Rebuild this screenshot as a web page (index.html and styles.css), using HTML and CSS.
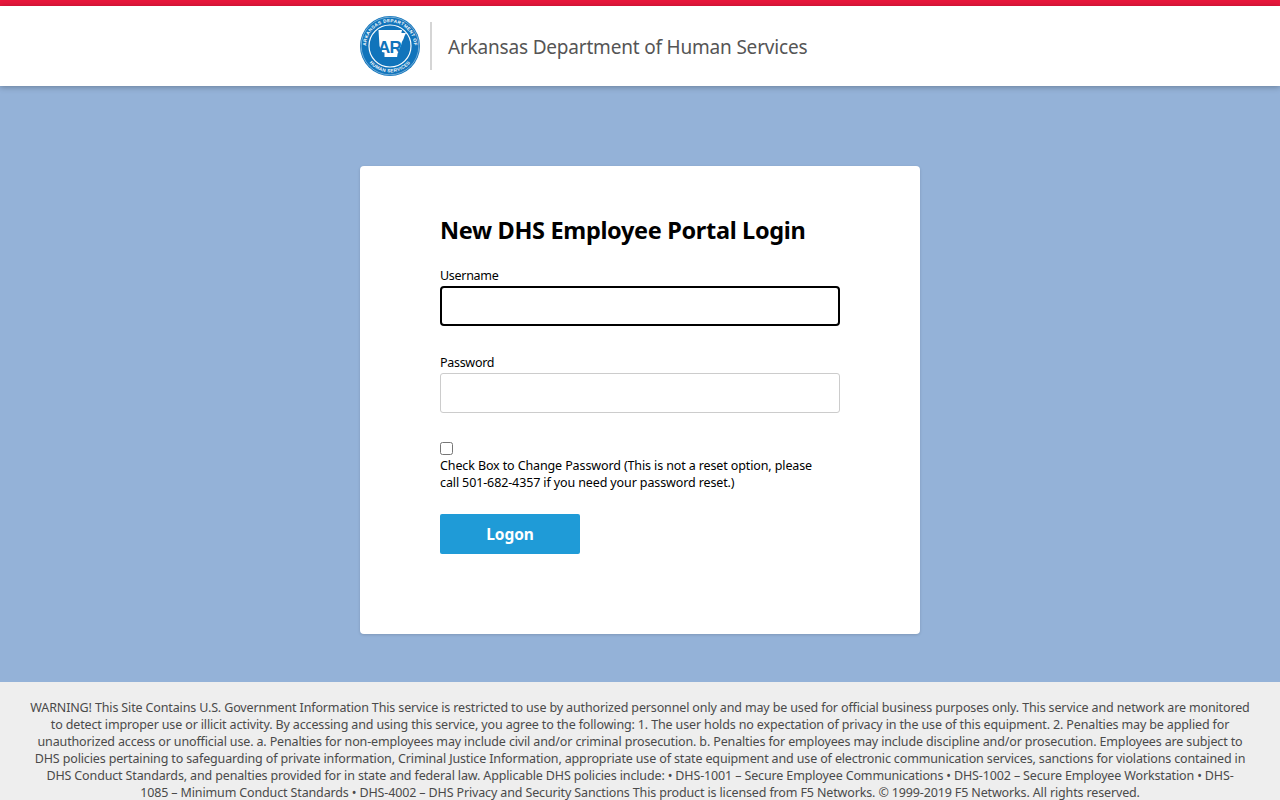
FILE: index.html
```html
<!DOCTYPE html>
<html>
<head>
	<meta charset="UTF-8">
	<title>New DHS Employee Portal Login</title>
	<link rel="stylesheet" href="styles.css">
</head>
<body>
	<div class="topbar"></div>
	<div class="header">
		<div class="brand">
			<svg class="logo" width="60" height="60" viewBox="0 0 60 60">
				<circle cx="30" cy="30" r="30" fill="#1174bb"/>
				<circle cx="30" cy="30" r="28.8" fill="none" stroke="#d5e7f4" stroke-width="0.5"/>
				<circle cx="30" cy="30" r="21" fill="none" stroke="#fff" stroke-width="1.2"/>
				<defs>
					<path id="arcTop" d="M8.3 40.5a24 24 0 1 1 43.4 0"/>
					<path id="arcBottom" d="M6.2 41.5a26.5 26.5 0 0 0 47.6 0"/>
				</defs>
				<text class="logo-ring"><textPath href="#arcTop" startOffset="50%" text-anchor="middle">ARKANSAS DEPARTMENT OF</textPath></text>
				<text class="logo-ring"><textPath href="#arcBottom" startOffset="50%" text-anchor="middle">HUMAN SERVICES</textPath></text>
				<path d="M18.500 14h23.500l-.6 3H46l-1.500 3-1 3-1.600 3-1 4-1.500 2.500-.4 3-1.400 2-.5 3.500H24.500v-4.500l-2.500-.5L19.500 30z" fill="#fff"/>
				<text class="logo-ar" x="29.500" y="36.500" text-anchor="middle">AR</text>
			</svg>
			<div class="divider"></div>
			<div class="agency">Arkansas Department of Human Services</div>
		</div>
	</div>
	<div class="main">
		<div class="card">
			<h1>New DHS Employee Portal Login</h1>
			<form>
				<label class="field-label" for="username">Username</label>
				<div class="input username" id="username"></div>
				<label class="field-label" for="password">Password</label>
				<div class="input password" id="password"></div>
				<div class="check"><span class="checkbox"></span></div>
				<p class="check-text">Check Box to Change Password (This is not a reset option, please call 501-682-4357 if you need your password reset.)</p>
				<button type="button" class="logon">Logon</button>
			</form>
		</div>
	</div>
	<div class="footer">
		<p>WARNING! This Site Contains U.S. Government Information This service is restricted to use by authorized personnel only and may be used for official business purposes only. This service and network are monitored to detect improper use or illicit activity. By accessing and using this service, you agree to the following: 1. The user holds no expectation of privacy in the use of this equipment. 2. Penalties may be applied for unauthorized access or unofficial use. a. Penalties for non-employees may include civil and/or criminal prosecution. b. Penalties for employees may include discipline and/or prosecution. Employees are subject to DHS policies pertaining to safeguarding of private information, Criminal Justice Information, appropriate use of state equipment and use of electronic communication services, sanctions for violations contained in DHS Conduct Standards, and penalties provided for in state and federal law. Applicable DHS policies include: • DHS-1001 – Secure Employee Communications • DHS-1002 – Secure Employee Workstation • DHS-<br>1085 – Minimum Conduct Standards • DHS-4002 – DHS Privacy and Security Sanctions This product is licensed from F5 Networks. © 1999-2019 F5 Networks. All rights reserved.</p>
	</div>
</body>
</html>
```

FILE: styles.css
```css
*{
	padding: 0;
	margin: 0;
	box-sizing: border-box;
}
html,body{
	height: 800px;
	overflow: hidden;
}
body{
	font-family: "Noto Sans", "Open Sans", sans-serif;
	font-size: 12.5px;
	letter-spacing: -0.12px;
	color: #000;
	background-color: #94b2d8;
	display: flex;
	flex-direction: column;
}
.topbar{
	height: 6px;
	flex: none;
	background-color: #e8173c;
}
.header{
	height: 80px;
	flex: none;
	background-color: #fff;
	box-shadow: 0 1px 6px rgba(0,0,0,.3);
	display: flex;
	justify-content: center;
}
.brand{
	width: 560px;
	display: flex;
	align-items: center;
}
.logo{
	flex: none;
}
.logo-ring{
	font-family: "Liberation Sans", sans-serif;
	font-size: 4.6px;
	font-weight: bold;
	letter-spacing: 0.35px;
	fill: #fff;
}
.logo-ar{
	font-family: "Liberation Sans", sans-serif;
	font-size: 17px;
	font-weight: bold;
	fill: #1174bb;
	letter-spacing: -0.8px;
}
.divider{
	width: 2px;
	height: 48px;
	background-color: #d5d5d5;
	margin-left: 10px;
}
.agency{
	font-size: 19px;
	letter-spacing: -0.19px;
	color: #555;
	margin-left: 16px;
	padding-top: 2px;
}
.main{
	height: 596px;
	flex: none;
	padding-top: 80px;
	display: flex;
	justify-content: center;
}
.card{
	width: 560px;
	height: 468px;
	background-color: #fff;
	border-radius: 4px;
	box-shadow: 0 1px 3px rgba(0,0,0,.15);
	padding: 46px 80px 0;
}
h1{
	font-size: 23.5px;
	letter-spacing: -0.33px;
	font-weight: bold;
	line-height: 36px;
	margin-bottom: 18px;
}
.field-label{
	display: block;
	line-height: 18px;
	padding-top: 1px;
	margin-bottom: 1px;
	height: 19px;
	letter-spacing: -0.3px;
}
.input{
	height: 40px;
	border: 1px solid #ccc;
	border-radius: 3px;
}
.username{
	border: 2px solid #000;
	border-radius: 4px;
	margin-bottom: 27px;
}
.password{
	margin-bottom: 27px;
}
.check{
	height: 17px;
	display: flex;
	align-items: center;
}
.checkbox{
	width: 13px;
	height: 13px;
	border: 1px solid #767676;
	border-radius: 2.5px;
	background-color: #fff;
}
.check-text{
	width: 380px;
	line-height: 17px;
	margin-bottom: 23px;
}
.logon{
	display: block;
	width: 140px;
	height: 40px;
	border: 0;
	border-radius: 2px;
	background-color: #1f9bd7;
	color: #fff;
	font-family: inherit;
	font-size: 15.5px;
	letter-spacing: -0.1px;
	font-weight: bold;
}
.footer{
	height: 118px;
	flex: none;
	overflow: hidden;
	background-color: #eee;
	padding: 17px 29px 0;
	color: #4a4a4a;
	letter-spacing: -0.14px;
	line-height: 17px;
	text-align: center;
}
```
